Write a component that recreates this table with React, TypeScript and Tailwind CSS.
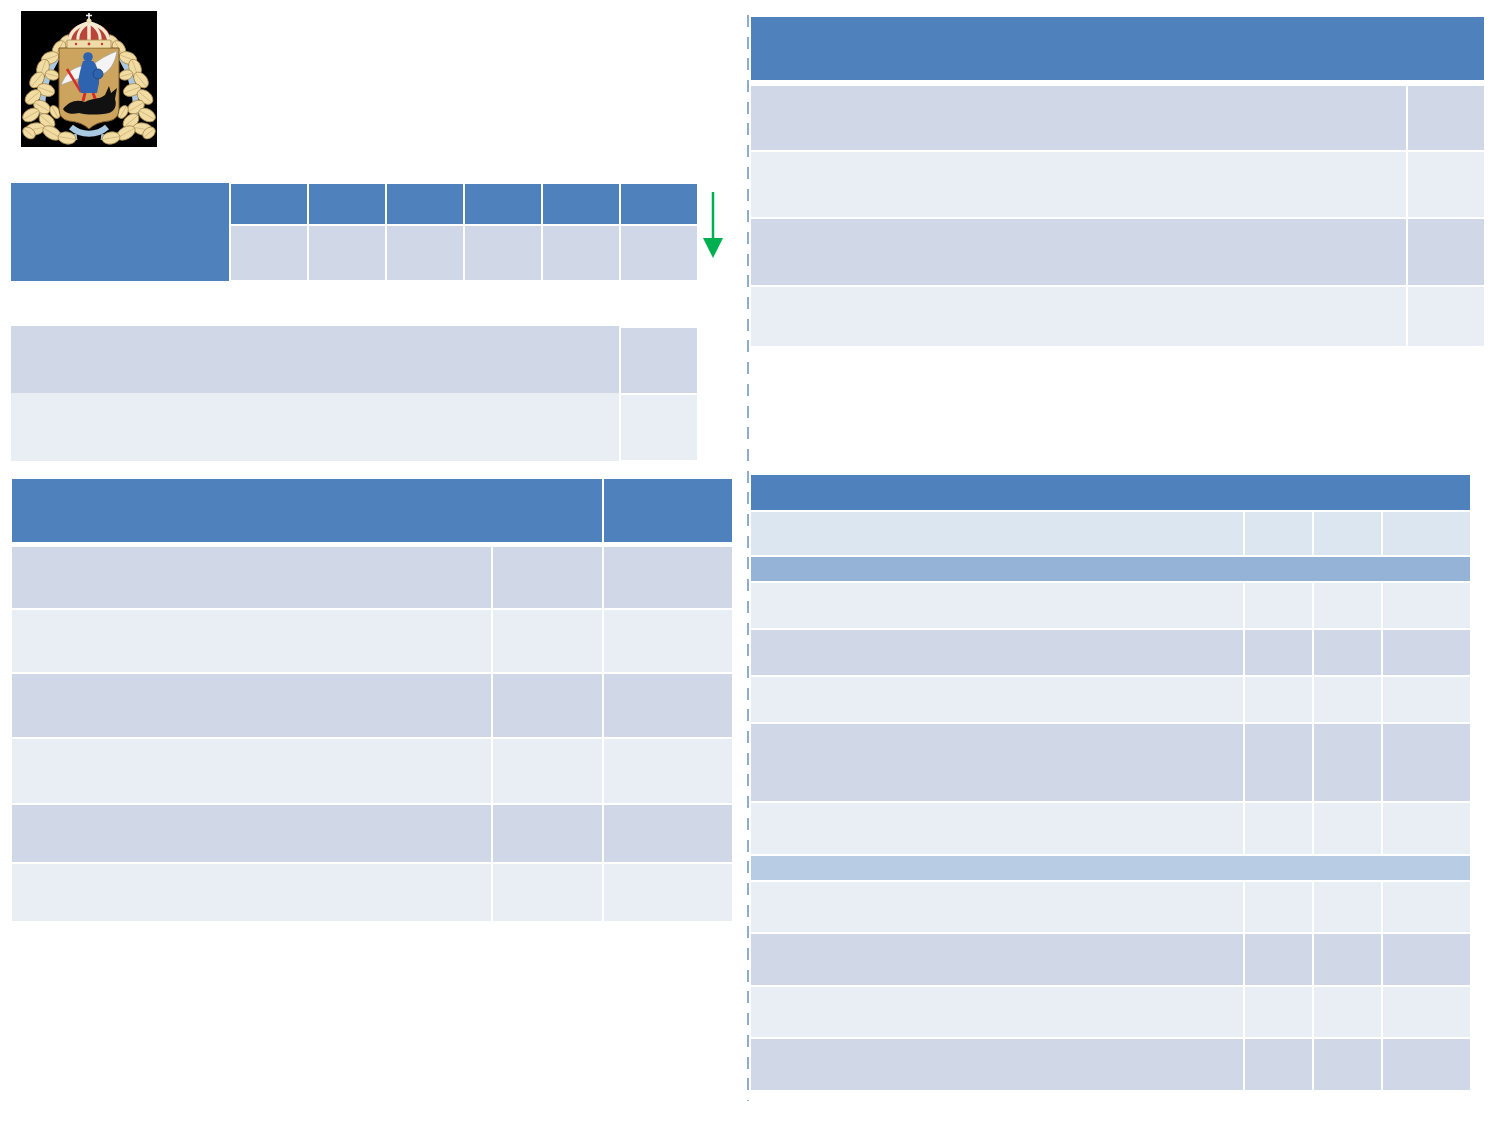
import React from 'react';

const headBg = 'bg-[#4f81bd]';
const darkBg = 'bg-[#d0d8e8]';
const lightBg = 'bg-[#e9edf4]';

type Leaf = [number, number, number, number, number];

// left oak branch, the right one is mirrored
const leaves: Leaf[] = [
  [46, 30, 8, 5.5, -30],
  [38, 38, 9, 6, -60],
  [29, 47, 9, 6, -20],
  [22, 57, 9, 6, -70],
  [31, 64, 7, 5, 15],
  [16, 69, 9, 6, -50],
  [25, 79, 9, 6, 20],
  [12, 86, 9, 6, -40],
  [21, 96, 9, 6, 30],
  [10, 104, 9, 6, -30],
  [26, 110, 9, 6, 40],
  [14, 118, 10, 6, -10],
  [31, 122, 10, 6, 30],
  [46, 127, 9, 6, 10],
  [34, 101, 7, 4.5, 60],
  [8, 122, 7, 5, 40],
];

function Branch() {
  return (
    <g>
      <path d="M46 34 C30 50 18 80 22 108 C26 122 40 128 56 126" fill="none" stroke="#a9c8e2" strokeWidth="6" />
      {leaves.map(([cx, cy, rx, ry, r], i) => (
        <g key={i} transform={`rotate(${r} ${cx} ${cy})`}>
          <ellipse cx={cx} cy={cy} rx={rx} ry={ry} fill="#f1dca4" stroke="#a88a4c" strokeWidth="0.8" />
          <path d={`M${cx - rx + 1} ${cy} H${cx + rx - 1}`} stroke="#c7a96a" strokeWidth="0.6" />
        </g>
      ))}
    </g>
  );
}

function CoatOfArms() {
  return (
    <svg viewBox="0 0 136 136" width="136" height="136" className="block">
      <rect width="136" height="136" fill="#000" />
      <Branch />
      <g transform="translate(136 0) scale(-1 1)">
        <Branch />
      </g>
      {/* shield */}
      <path
        d="M38 37 H98 V98 Q98 108 88 110 Q75 111 68 118 Q61 111 48 110 Q38 108 38 98 Z"
        fill="#cda45e"
        stroke="#7a5a28"
        strokeWidth="1"
      />
      {/* crown */}
      <path d="M48 31 C44 20 56 12 68 12 C80 12 92 20 88 31 Z" fill="#b8443a" />
      <path d="M48 31 C49 20 58 14 68 12 C78 14 87 20 88 31" fill="none" stroke="#f5ead0" strokeWidth="3.5" />
      <path d="M57 31 C56 22 60 16 68 12 C76 16 80 22 79 31" fill="none" stroke="#f5ead0" strokeWidth="3" />
      <path d="M68 12 V31" stroke="#f5ead0" strokeWidth="3.5" />
      <rect x="46" y="29" width="44" height="8" rx="1" fill="#f0dcaa" stroke="#a88a4c" strokeWidth="0.8" />
      <circle cx="55" cy="33" r="1.2" fill="#c0392b" />
      <circle cx="68" cy="33" r="1.4" fill="#c0392b" />
      <circle cx="81" cy="33" r="1.2" fill="#c0392b" />
      <circle cx="68" cy="10" r="2.5" fill="#f3e2b4" />
      <path d="M68 2 V8 M65 4.5 H71" stroke="#f5f5f5" strokeWidth="1.6" />
      {/* wings */}
      <path d="M62 55 C52 56 45 62 40 74 C47 71 54 69 62 66 Z" fill="#f4f4f4" stroke="#9a9a9a" strokeWidth="0.6" />
      <path d="M74 52 C82 46 89 43 96 40 C94 52 89 61 78 65 Z" fill="#f4f4f4" stroke="#9a9a9a" strokeWidth="0.6" />
      {/* sword */}
      <path d="M46 58 L60 81" stroke="#d62b2b" strokeWidth="2.5" />
      {/* archangel */}
      <path d="M62 50 C60 56 58 64 57 72 L60 82 L76 82 L78 72 C78 62 76 54 72 50 Z" fill="#2e63b0" />
      <circle cx="67" cy="46" r="4.8" fill="#2e63b0" />
      <circle cx="77" cy="63" r="5" fill="#2e63b0" stroke="#1d3f75" strokeWidth="0.8" />
      <path d="M64 82 L62 90 M72 82 L75 90" stroke="#d62b2b" strokeWidth="3" />
      {/* demon */}
      <path
        d="M42 98 C48 90 56 88 64 91 C70 87 78 89 84 84 L88 75 L90 82 L96 77 L94 88 C96 94 94 100 88 102 C78 104 66 104 58 102 C50 104 44 102 42 98 Z"
        fill="#111"
      />
      {/* ribbon bow */}
      <path d="M50 116 C60 125 76 125 86 116" fill="none" stroke="#a9c8e2" strokeWidth="6" />
    </svg>
  );
}

function Arrow() {
  return (
    <svg width="20" height="66" viewBox="0 0 20 66" className="ml-[6px] mt-[9px] shrink-0">
      <rect x="8.75" y="0" width="2.5" height="48" fill="#00b050" />
      <polygon points="0,46 20,46 10,66" fill="#00b050" />
    </svg>
  );
}

const leftRows: [string, string][] = [
  ['h-[61px]', darkBg],
  ['h-[62px]', lightBg],
  ['h-[63px]', darkBg],
  ['h-[64px]', lightBg],
  ['h-[57px]', darkBg],
  ['h-[57px]', lightBg],
];

const topRightRows: [string, string][] = [
  ['h-[64px]', darkBg],
  ['h-[65px]', lightBg],
  ['h-[66px]', darkBg],
  ['h-[59px]', lightBg],
];

type RightRow = { h: string; bg: string; span?: boolean };

const bottomRightRows: RightRow[] = [
  { h: 'h-[35px]', bg: headBg, span: true },
  { h: 'h-[43px]', bg: 'bg-[#dce6f1]' },
  { h: 'h-[24px]', bg: 'bg-[#95b3d7]', span: true },
  { h: 'h-[45px]', bg: lightBg },
  { h: 'h-[45px]', bg: darkBg },
  { h: 'h-[45px]', bg: lightBg },
  { h: 'h-[77px]', bg: darkBg },
  { h: 'h-[51px]', bg: lightBg },
  { h: 'h-[24px]', bg: 'bg-[#b8cce4]', span: true },
  { h: 'h-[50px]', bg: lightBg },
  { h: 'h-[51px]', bg: darkBg },
  { h: 'h-[50px]', bg: lightBg },
  { h: 'h-[51px]', bg: darkBg },
];

export default function App() {
  return (
    <div className="flex h-[1125px] w-[1500px] overflow-hidden bg-white font-['Liberation_Sans',Arial,sans-serif]">
      {/* left half */}
      <div className="w-[747px] shrink-0 pl-[11px] pt-[11px]">
        <div className="ml-[10px] h-[136px] w-[136px]">
          <CoatOfArms />
        </div>

        {/* table with six columns */}
        <div className="mt-[36px] flex items-start">
          <div className={`h-[98px] w-[218px] ${headBg}`} />
          <div className="ml-[2px] mt-[1px] grid grid-cols-[repeat(6,76px)] grid-rows-[40px_54px] gap-[2px]">
            {Array.from({ length: 6 }).map((_, i) => (
              <div key={`h${i}`} className={headBg} />
            ))}
            {Array.from({ length: 6 }).map((_, i) => (
              <div key={`c${i}`} className={darkBg} />
            ))}
          </div>
          <Arrow />
        </div>

        {/* two-row table */}
        <div className="mt-[45px] flex items-start">
          <div className="flex w-[608px] flex-col">
            <div className={`h-[67px] ${darkBg}`} />
            <div className={`h-[68px] ${lightBg}`} />
          </div>
          <div className="ml-[2px] mt-[2px] flex w-[76px] flex-col gap-[2px]">
            <div className={`h-[65px] ${darkBg}`} />
            <div className={`h-[65px] ${lightBg}`} />
          </div>
        </div>

        {/* three-column table */}
        <div className="ml-[1px] mt-[18px] w-[720px]">
          <div className="grid h-[63px] grid-cols-[590px_128px] gap-x-[2px]">
            <div className={headBg} />
            <div className={headBg} />
          </div>
          <div className="mt-[5px] flex flex-col gap-[2px]">
            {leftRows.map(([h, bg], i) => (
              <div key={i} className={`grid grid-cols-[479px_109px_128px] gap-x-[2px] ${h}`}>
                <div className={bg} />
                <div className={bg} />
                <div className={bg} />
              </div>
            ))}
          </div>
        </div>
      </div>

      {/* dashed divider */}
      <div className="mt-[15px] h-[1086px] w-[2px] shrink-0 bg-[repeating-linear-gradient(to_bottom,#8eabd0_0px,#8eabd0_12px,transparent_12px,transparent_21.7px)]" />

      {/* right half */}
      <div className="pl-[2px] pt-[17px]">
        <div className="w-[733px]">
          <div className={`h-[63px] ${headBg}`} />
          <div className="mt-[6px] flex flex-col gap-[2px]">
            {topRightRows.map(([h, bg], i) => (
              <div key={i} className={`grid grid-cols-[655px_76px] gap-x-[2px] ${h}`}>
                <div className={bg} />
                <div className={bg} />
              </div>
            ))}
          </div>
        </div>

        <div className="mt-[129px] flex w-[719px] flex-col gap-[2px]">
          {bottomRightRows.map((r, i) =>
            r.span ? (
              <div key={i} className={`${r.h} ${r.bg}`} />
            ) : (
              <div key={i} className={`grid grid-cols-[492px_67px_67px_87px] gap-x-[2px] ${r.h}`}>
                <div className={r.bg} />
                <div className={r.bg} />
                <div className={r.bg} />
                <div className={r.bg} />
              </div>
            ),
          )}
        </div>
      </div>
    </div>
  );
}
